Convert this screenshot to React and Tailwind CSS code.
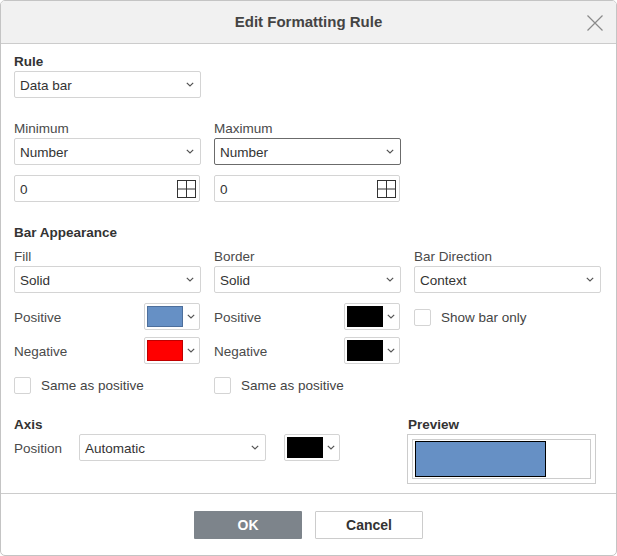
import React from "react";

const Chevron = () => (
  <svg width="8" height="5" viewBox="0 0 8 5" className="shrink-0">
    <path d="M0.8 0.8 L4 4 L7.2 0.8" fill="none" stroke="#555" strokeWidth="1.2" />
  </svg>
);

const Select = ({ value, className = "", focused = false }) => (
  <div
    className={`h-[27px] flex items-center justify-between pl-[5px] pr-[6px] bg-white rounded-[2px] border ${
      focused ? "border-[#6b6b6b]" : "border-[#d4d4d4]"
    } ${className}`}
  >
    <span className="text-[13.5px] leading-[18px] pt-[2px] text-[#333]">{value}</span>
    <Chevron />
  </div>
);

const GridIcon = () => (
  <svg width="19" height="18" viewBox="0 0 19 18">
    <rect x="0.5" y="0.5" width="18" height="17" fill="none" stroke="#333" strokeWidth="1" />
    <line x1="9.5" y1="0.5" x2="9.5" y2="17.5" stroke="#333" strokeWidth="1" />
    <line x1="0.5" y1="9" x2="18.5" y2="9" stroke="#333" strokeWidth="1" />
  </svg>
);

const NumInput = ({ value }) => (
  <div className="h-[27px] w-[186px] flex items-center justify-between pl-[5px] pr-[3px] bg-white rounded-[2px] border border-[#d4d4d4]">
    <span className="text-[13.5px] leading-[18px] pt-[2px] text-[#333]">{value}</span>
    <GridIcon />
  </div>
);

const ColorPick = ({ color, edge }) => (
  <div className="h-[27px] w-[56px] flex items-center pl-[2px] pr-[4px] gap-[4px] bg-white rounded-[2px] border border-[#d4d4d4]">
    <div className="w-[41px] h-[21px] border" style={{ backgroundColor: color, borderColor: edge }} />
    <Chevron />
  </div>
);

const Check = ({ label }) => (
  <div className="flex items-center h-[18px]">
    <div className="w-[17px] h-[17px] rounded-[2px] border border-[#d4d4d4] bg-white" />
    <span className="ml-[10px] text-[13.5px] leading-[18px] pt-[2px] text-[#444]">{label}</span>
  </div>
);

const Label = ({ children, bold = false, className = "" }) => (
  <div
    className={`h-[16px] leading-[18px] text-[13.5px] ${
      bold ? "font-bold text-[#333]" : "text-[#4a4a4a]"
    } ${className}`}
  >
    {children}
  </div>
);

const ColorRow = ({ label, color, edge }) => (
  <div className="w-[186px] flex items-center justify-between">
    <span className="text-[13.5px] leading-[18px] pt-[2px] text-[#4a4a4a]">{label}</span>
    <ColorPick color={color} edge={edge} />
  </div>
);

export default function App() {
  return (
    <div
      className="w-[617px] h-[556px] bg-white border border-[#c4c4c4] rounded-[5px] overflow-hidden flex flex-col"
      style={{ fontFamily: '"Liberation Sans", Arial, sans-serif' }}
    >
      <div className="relative h-[43px] shrink-0 bg-[#f1f1f1] border-b border-[#cccccc] flex items-center justify-center">
        <span className="text-[15px] font-bold text-[#444] pt-[1px]">Edit Formatting Rule</span>
        <button className="absolute right-[13px] top-[14px] w-[16px] h-[16px]">
          <svg width="16" height="16" viewBox="0 0 16 16">
            <path d="M0.5 0.5 L15.5 15.5 M15.5 0.5 L0.5 15.5" stroke="#8a8a8a" strokeWidth="1.2" fill="none" />
          </svg>
        </button>
      </div>

      <div className="flex-1 px-[13px] pt-[9px] border-b border-[#cccccc]">
        <Label bold>Rule</Label>
        <Select value="Data bar" className="mt-[2px] w-[187px]" />

        <div className="flex gap-[13px] mt-[22px]">
          <div className="w-[187px]">
            <Label>Minimum</Label>
            <Select value="Number" className="mt-[2px] w-[187px]" />
            <div className="mt-[10px]">
              <NumInput value="0" />
            </div>
          </div>
          <div className="w-[187px]">
            <Label>Maximum</Label>
            <Select value="Number" focused className="mt-[2px] w-[187px]" />
            <div className="mt-[10px]">
              <NumInput value="0" />
            </div>
          </div>
        </div>

        <Label bold className="mt-[22px]">Bar Appearance</Label>
        <div className="flex gap-[13px] mt-[8px]">
          <div className="w-[187px]">
            <Label>Fill</Label>
            <Select value="Solid" className="mt-[2px] w-[187px]" />
            <div className="mt-[10px]">
              <ColorRow label="Positive" color="#6690c5" edge="#4d6f9c" />
            </div>
            <div className="mt-[7px]">
              <ColorRow label="Negative" color="#ff0000" edge="#c00000" />
            </div>
            <div className="mt-[12px]">
              <Check label="Same as positive" />
            </div>
          </div>
          <div className="w-[187px]">
            <Label>Border</Label>
            <Select value="Solid" className="mt-[2px] w-[187px]" />
            <div className="mt-[10px]">
              <ColorRow label="Positive" color="#000000" edge="#000000" />
            </div>
            <div className="mt-[7px]">
              <ColorRow label="Negative" color="#000000" edge="#000000" />
            </div>
            <div className="mt-[12px]">
              <Check label="Same as positive" />
            </div>
          </div>
          <div className="w-[187px]">
            <Label>Bar Direction</Label>
            <Select value="Context" className="mt-[2px] w-[187px]" />
            <div className="mt-[15px]">
              <Check label="Show bar only" />
            </div>
          </div>
        </div>

        <div className="flex mt-[22px]">
          <div className="w-[393px]">
            <Label bold>Axis</Label>
            <div className="mt-[2px] flex items-center">
              <span className="w-[65px] text-[13.5px] leading-[18px] pt-[2px] text-[#4a4a4a]">Position</span>
              <Select value="Automatic" className="w-[187px]" />
              <div className="ml-[18px]">
                <ColorPick color="#000000" edge="#000000" />
              </div>
            </div>
          </div>
          <div>
            <Label bold className="ml-[1px]">Preview</Label>
            <div className="mt-[2px] w-[189px] h-[50px] border border-[#cccccc] p-[4px]">
              <div className="w-full h-full border border-[#cccccc] pl-[2px] py-[1px]">
                <div className="w-[131px] h-full bg-[#6690c5] border-[1.5px] border-black" />
              </div>
            </div>
          </div>
        </div>
      </div>

      <div className="h-[61px] shrink-0 flex justify-center gap-[13px] pt-[17px]">
        <button className="w-[108px] h-[28px] bg-[#7d848b] rounded-[1px] text-white font-bold text-[14px]">
          OK
        </button>
        <button className="w-[108px] h-[28px] bg-white border border-[#cccccc] rounded-[1px] text-[#333] font-bold text-[14px]">
          Cancel
        </button>
      </div>
    </div>
  );
}
